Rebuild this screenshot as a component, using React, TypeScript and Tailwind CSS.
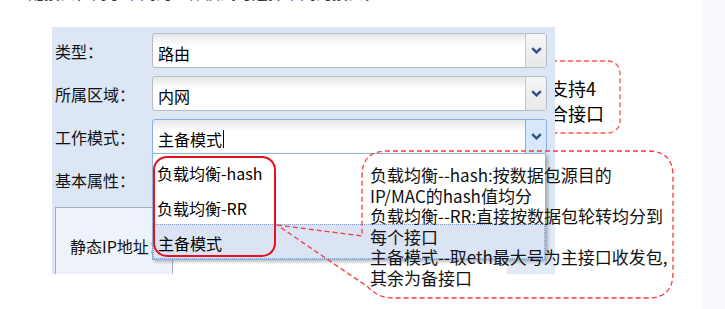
import type { ReactNode } from 'react';

const cjk = "font-['Noto_Sans_CJK_SC',sans-serif]";

function Chevron() {
  return (
    <svg width="11" height="7" viewBox="0 0 11 7">
      <path d="M1.2 1.2 L5.5 5.4 L9.8 1.2" fill="none" stroke="#34508c" strokeWidth="2.4" />
    </svg>
  );
}

function Combo({ value, focused, children }: { value: string; focused?: boolean; children?: ReactNode }) {
  return (
    <div
      className={`relative flex h-[35px] w-[395px] rounded-[3px] border bg-linear-to-b from-[#e6e6e6] to-white to-[35%] ${
        focused ? 'border-[#84b0e0]' : 'border-[#b6bac6]'
      }`}
    >
      <div className="flex flex-1 items-center pl-[5px] pt-[5px] text-[16px] leading-[18px] text-black">
        {value}
        {focused && <span className="ml-px h-[18px] border-l border-black" />}
      </div>
      <div
        className={`flex w-[21px] items-center justify-center rounded-r-[2px] border-l ${
          focused ? 'border-[#84b0e0] bg-[#d7e8fa]' : 'border-[#c4c7ce] bg-linear-to-b from-[#f6f6f6] to-[#e8e8e8]'
        }`}
      >
        <Chevron />
      </div>
      {children}
    </div>
  );
}

function Row({ label, children }: { label: string; children?: ReactNode }) {
  return (
    <div className="flex h-[35px] items-center">
      <div className="w-[100px] pl-[3px] text-[16px] leading-[18px] text-[#111]">{label}</div>
      {children}
    </div>
  );
}

const options = ['负载均衡-hash', '负载均衡-RR', '主备模式'];

export default function App() {
  return (
    <div className={`flex h-[309px] w-[725px] overflow-hidden bg-white ${cjk}`}>
      <div className="relative w-[702px]">
        {/* cut-off line of document text */}
        <div className="absolute left-[28px] top-[-16px] text-[16px] leading-[16px] text-[#333]">
          配接口，对于不同的工作模式可选择不同的接口。
        </div>

        {/* callout behind the panel */}
        <svg className="absolute left-0 top-0" width="702" height="309">
          <rect x="508" y="61" width="112" height="72" rx="12" fill="none" stroke="#ff5252" strokeWidth="1.3" strokeDasharray="5 3" />
        </svg>
        <div className="absolute left-[514px] top-[76px] text-[18px] leading-[25px] text-black">
          最多支持4
          <br />
          个聚合接口
        </div>

        {/* form panel */}
        <div className="relative z-10 ml-[52px] mt-[27px] flex h-[247px] w-[503px] flex-col gap-[8px] bg-[#dce6f5] pt-[6px]">
          <Row label="类型：">
            <Combo value="路由" />
          </Row>
          <Row label="所属区域：">
            <Combo value="内网" />
          </Row>
          <Row label="工作模式：">
            <Combo value="主备模式" focused>
              <div className="absolute left-[-1px] top-full w-[394px] border border-[#8fb4de] bg-white shadow-[2px_2px_3px_rgba(0,0,0,0.25)]">
                {options.map((o, i) => (
                  <div
                    key={o}
                    className={`flex h-[35px] items-center pl-[4px] pt-[3px] text-[16px] leading-[18px] text-black ${
                      i === 2 ? 'border border-dotted border-[#7f9fd3] bg-[#dbe4f4]' : ''
                    }`}
                  >
                    {o}
                  </div>
                ))}
              </div>
            </Combo>
          </Row>
          <Row label="基本属性：" />
          <div className="mt-[2px] flex flex-1 pl-[3px]">
            <div className="w-[118px] border-l border-r border-t border-[#a7afbf] bg-[#eef3fb] pl-[14px] pt-[28px] text-[16px] leading-[20px] text-[#111]">
              静态IP地址：
            </div>
            <div className="w-[334px] bg-white" />
            <div className="flex-1 bg-[#e2eaf6]" />
          </div>
        </div>

        {/* red ring round the options */}
        <div className="absolute left-[153px] top-[156px] z-20 h-[101px] w-[123px] rounded-[14px] border-2 border-[#e5111c]" />

        {/* callout over the panel */}
        <svg className="absolute left-0 top-0 z-20" width="702" height="309">
          <path
            d="M277 225 L362 236 V176 Q362 151 387 151 H648 Q673 151 673 176 V273 Q673 298 648 298 H393 Q378 298 368 287 Z"
            fill="none"
            stroke="#f23c3c"
            strokeWidth="1.3"
            strokeDasharray="5 3"
          />
        </svg>
        <div className="absolute left-[370px] top-[165px] z-20 text-[17px] leading-[20.5px] text-[#111]">
          负载均衡--hash:按数据包源目的
          <br />
          IP/MAC的hash值均分
          <br />
          负载均衡--RR:直接按数据包轮转均分到
          <br />
          每个接口
          <br />
          主备模式--取eth最大号为主接口收发包,
          <br />
          其余为备接口
        </div>
      </div>
      <div className="flex-1 bg-[#f8f9fd]" />
    </div>
  );
}
